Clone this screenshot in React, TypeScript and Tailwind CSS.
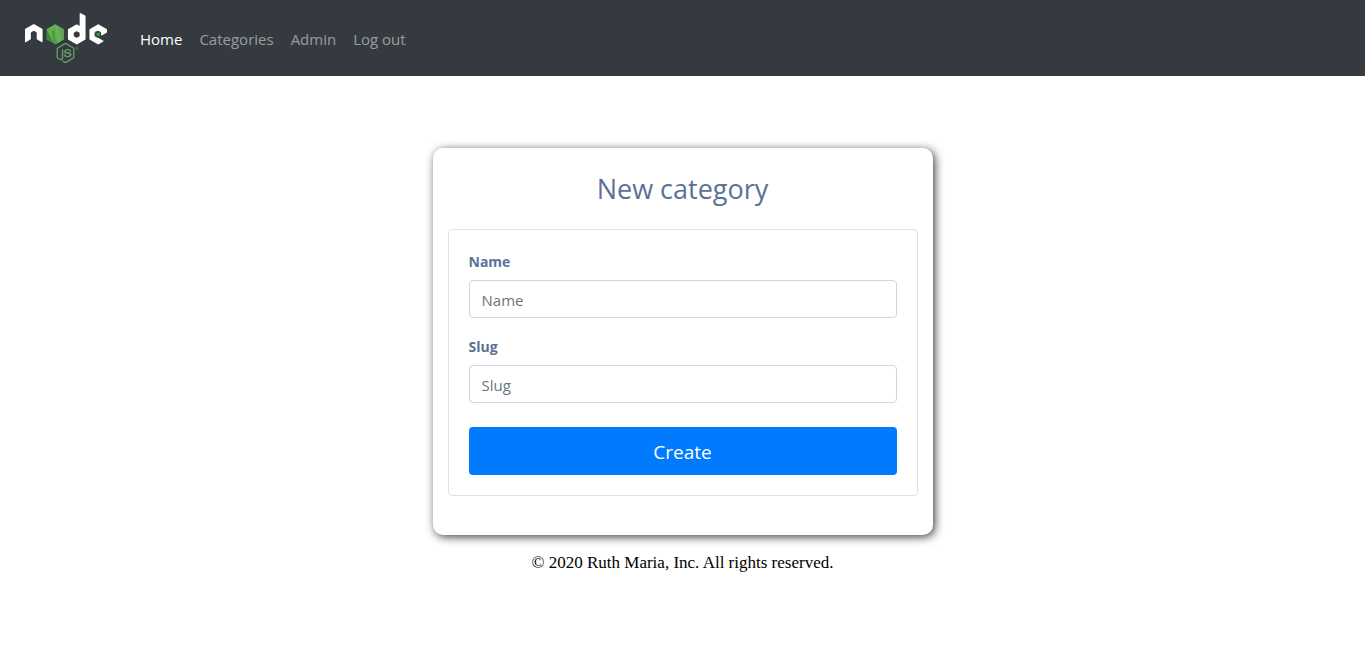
import { FaNode } from "react-icons/fa";

function Logo() {
  return (
    <a href="#" aria-label="Node.js" className="block">
      <svg width="0" height="0" className="absolute" aria-hidden="true">
        <defs>
          <linearGradient id="leaf" x1="0" y1="0.6" x2="1" y2="0.4">
            <stop offset="0.3" stopColor="#3f873f" />
            <stop offset="0.6" stopColor="#6cb35a" />
            <stop offset="0.95" stopColor="#5c9a56" />
          </linearGradient>
          <pattern id="node-fill" patternUnits="userSpaceOnUse" width="640" height="512">
            <rect width="640" height="512" fill="#fff" />
            <rect x="155" y="130" width="160" height="180" fill="url(#leaf)" />
            <path d="M155 130H250L208 210L226 300L166 185Z" fill="#62b545" />
            <path d="M155 170L228 310H155Z" fill="#3c8a3e" />
            <path d="M0 512V308H240L310 275L336 285L385 315L640 315V512Z" fill="#689f63" />
            <circle cx="567" cy="226" r="26" fill="#3f9a4c" />
          </pattern>
        </defs>
      </svg>
      <FaNode fill="url(#node-fill)" className="h-[66px] w-[82px]" />
    </a>
  );
}

const links = ["Home", "Categories", "Admin", "Log out"];
const fields = ["Name", "Slug"];

export default function App() {
  return (
    <div className="bg-white font-['Open_Sans',sans-serif]">
      <nav className="flex items-center gap-[25px] bg-[#343a40] px-[25px] py-[5px]">
        <Logo />
        <ul className="flex gap-px pt-[2px] text-[15px] leading-6">
          {links.map((link) => (
            <li key={link}>
              <a
                href="#"
                className={link === "Home" ? "block px-2 text-white" : "block px-2 text-white/50"}
              >
                {link}
              </a>
            </li>
          ))}
        </ul>
      </nav>

      <main className="mx-auto mt-[72px] max-w-[500px] rounded-[10px] bg-white px-[15px] pt-6 pb-[39px] text-[#5b7296] shadow-[2px_2px_10px_rgba(0,0,0,0.75)]">
        <h1 className="mb-6 text-center text-[27px] leading-[33px]">New category</h1>
        <form
          className="rounded border border-[#dee2e6] px-5 py-5"
          onSubmit={(event) => event.preventDefault()}
        >
          {fields.map((field) => (
            <div key={field} className="mb-[17px]">
              <label htmlFor={field} className="mb-[6px] block text-sm leading-6 font-bold">
                {field}
              </label>
              <input
                id={field}
                type="text"
                placeholder={field}
                className="block h-[38px] w-full rounded border border-[#ced4da] px-3 pt-[2px] text-[15px] text-[#495057] placeholder:text-[#6c757d]"
              />
            </div>
          ))}
          <button
            type="submit"
            className="mt-6 block h-12 w-full rounded bg-[#007bff] pt-[2px] text-[19px] text-white"
          >
            Create
          </button>
        </form>
      </main>

      <footer className="mt-4 text-center font-['Liberation_Serif',serif] text-[17px] leading-6 text-black">
        © 2020 Ruth Maria, Inc. All rights reserved.
      </footer>
    </div>
  );
}
